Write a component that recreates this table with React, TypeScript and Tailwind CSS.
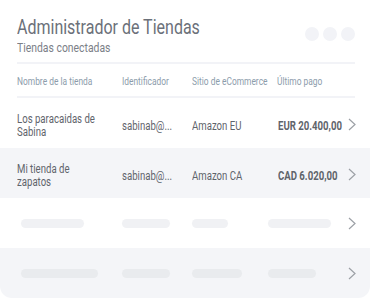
import React from "react";

type Store = {
  name: string[];
  id: string;
  site: string;
  amount: string;
};

const stores: Store[] = [
  { name: ["Los paracaidas de", "Sabina"], id: "sabinab@...", site: "Amazon EU", amount: "EUR 20.400,00" },
  { name: ["Mi tienda de", "zapatos"], id: "sabinab@...", site: "Amazon CA", amount: "CAD 6.020,00" },
];

// Roboto is wider than the condensed face in the mock, so text is squeezed horizontally
const narrow = "inline-block origin-left scale-x-[0.8]";

const Chevron = () => (
  <svg width="8" height="13" viewBox="0 0 8 13" fill="none" className="shrink-0">
    <path d="M1 1l6 5.5L1 12" stroke="#9ca0a6" strokeWidth="1.2" />
  </svg>
);

const Row: React.FC<{ gray?: boolean; children: React.ReactNode; last?: boolean; text?: boolean }> = ({
  gray,
  children,
  last,
  text,
}) => (
  <div
    className={`flex items-center h-[50px] pl-[17px] pr-[14px] ${gray ? "bg-[#f4f5f8]" : "bg-white"} ${
      last ? "rounded-b-[12px]" : ""
    }`}
  >
    <div className={`flex flex-1 min-w-0 items-center ${text ? "pt-[5px]" : ""}`}>{children}</div>
    <div className={`shrink-0 ${text ? "pt-[2px]" : ""}`}>
      <Chevron />
    </div>
  </div>
);

const Bar: React.FC<{ w: string; dark?: boolean }> = ({ w, dark }) => (
  <div className={`h-[9px] rounded-full ${w} ${dark ? "bg-[#e9ebee]" : "bg-[#f0f1f4]"}`} />
);

export default function App() {
  return (
    <div className="w-[370px] h-[299px] bg-white overflow-hidden" style={{ fontFamily: "Roboto, sans-serif" }}>
      <div className="pl-[17px] pr-[15px] pt-[15px]">
        <div className="flex items-start justify-between">
          <div className="whitespace-nowrap">
            <h1 className="text-[20px] leading-[24px] text-[#6b7079]">
              <span className={narrow}>Administrador de Tiendas</span>
            </h1>
            <p className="text-[13px] leading-[15px] mt-[1px] text-[#7b8087]">
              <span className={narrow}>Tiendas conectadas</span>
            </p>
          </div>
          <div className="flex gap-[4px] mt-[12px]">
            <span className="w-[14px] h-[14px] rounded-full bg-[#f2f3f7]" />
            <span className="w-[14px] h-[14px] rounded-full bg-[#f2f3f7]" />
            <span className="w-[14px] h-[14px] rounded-full bg-[#f2f3f7]" />
          </div>
        </div>
        <div className="h-[2px] bg-[#f2f3f7] mt-[7px]" />
        <div className="flex items-center h-[32px] pt-[3px] text-[10.5px] text-[#8c9cab] whitespace-nowrap">
          <span className="w-[105px]"><span className={narrow}>Nombre de la tienda</span></span>
          <span className="w-[70px]"><span className={narrow}>Identificador</span></span>
          <span className="w-[85px]"><span className={narrow}>Sitio de eCommerce</span></span>
          <span><span className={narrow}>Último pago</span></span>
        </div>
        <div className="h-[2px] bg-[#f2f3f7]" />
      </div>

      <div>
        {stores.map((s, i) => (
          <Row key={s.id + i} gray={i % 2 === 1} text>
            <div className="w-[105px] shrink-0 text-[12px] leading-[12.5px] whitespace-nowrap text-[#5f646b]">
              {s.name.map((line) => (
                <div key={line}>
                  <span className={narrow}>{line}</span>
                </div>
              ))}
            </div>
            <div className="w-[70px] shrink-0 text-[12px] whitespace-nowrap text-[#5f646b]">
              <span className={narrow}>{s.id}</span>
            </div>
            <div className="w-[86px] shrink-0 text-[12px] whitespace-nowrap text-[#5f646b]">
              <span className={narrow}>{s.site}</span>
            </div>
            <div className="flex-1 min-w-0 text-[12px] font-bold whitespace-nowrap text-[#5f646b]">
              <span className={narrow}>{s.amount}</span>
            </div>
          </Row>
        ))}
        <Row>
          <div className="w-[105px] pl-[4px]"><Bar w="w-[63px]" /></div>
          <div className="w-[70px]"><Bar w="w-[48px]" /></div>
          <div className="w-[76px]"><Bar w="w-[36px]" /></div>
          <Bar w="w-[63px]" />
        </Row>
        <Row gray last>
          <div className="w-[105px] pl-[4px]"><Bar w="w-[77px]" dark /></div>
          <div className="w-[70px]"><Bar w="w-[48px]" dark /></div>
          <div className="w-[76px]"><Bar w="w-[50px]" dark /></div>
          <Bar w="w-[48px]" dark />
        </Row>
      </div>
    </div>
  );
}
